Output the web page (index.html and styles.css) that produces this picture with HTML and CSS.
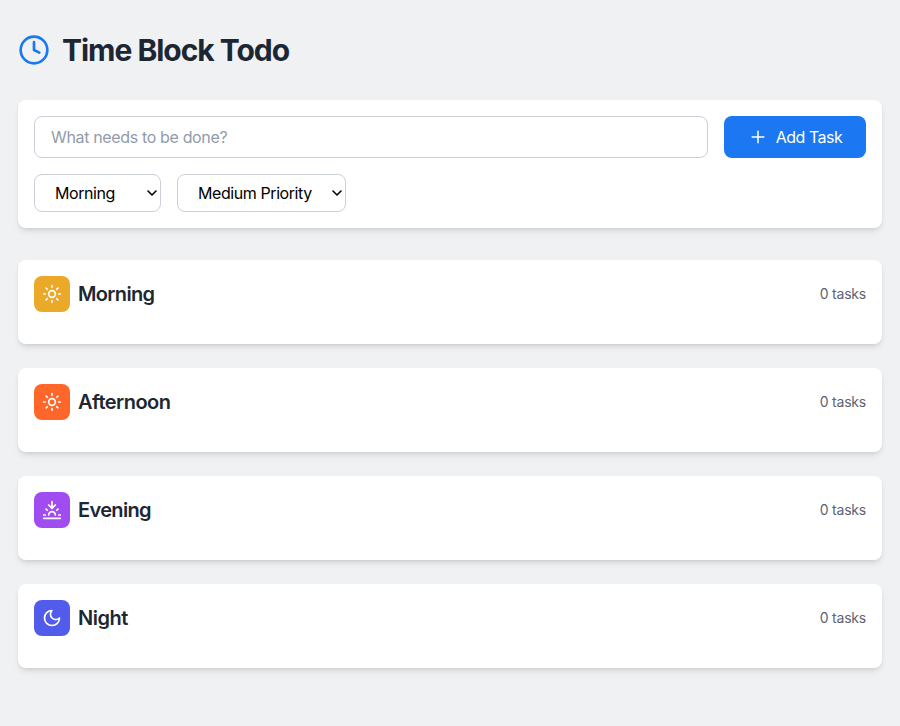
FILE: index.html
```html
<!DOCTYPE html>
<html lang="en">
<head>
<meta charset="utf-8">
<title>Time Block Todo</title>
<link rel="stylesheet" href="styles.css">
</head>
<body>
<main class="app">
  <header class="header">
    <svg class="icon logo" viewBox="0 0 24 24"><circle cx="12" cy="12" r="10"/><polyline points="12 6 12 12 16 14"/></svg>
    <h1 class="title">Time Block Todo</h1>
  </header>

  <form class="card form">
    <div class="row">
      <input class="task-input" type="text" placeholder="What needs to be done?">
      <button class="add" type="button">
        <svg class="icon" viewBox="0 0 24 24"><path d="M5 12h14M12 5v14"/></svg>
        <span class="add-label">Add Task</span>
      </button>
    </div>
    <div class="row">
      <div class="select-wrap block-select">
        <select class="select"><option>Morning</option><option>Afternoon</option><option>Evening</option><option>Night</option></select>
        <svg class="chevron" viewBox="0 0 10 6"><path d="M1 1l4 4 4-4"/></svg>
      </div>
      <div class="select-wrap priority-select">
        <select class="select"><option>Medium Priority</option><option>Low Priority</option><option>High Priority</option></select>
        <svg class="chevron" viewBox="0 0 10 6"><path d="M1 1l4 4 4-4"/></svg>
      </div>
    </div>
  </form>

  <div class="blocks">
    <section class="card block">
      <span class="badge morning"><svg class="icon" viewBox="0 0 24 24"><circle cx="12" cy="12" r="4"/><path d="M12 2v2M12 20v2M4.93 4.93l1.41 1.41M17.66 17.66l1.41 1.41M2 12h2M20 12h2M6.34 17.66l-1.41 1.41M19.07 4.93l-1.41 1.41"/></svg></span>
      <h2 class="name name-morning">Morning</h2>
      <span class="count">0 tasks</span>
    </section>
    <section class="card block">
      <span class="badge afternoon"><svg class="icon" viewBox="0 0 24 24"><circle cx="12" cy="12" r="4"/><path d="M12 2v2M12 20v2M4.93 4.93l1.41 1.41M17.66 17.66l1.41 1.41M2 12h2M20 12h2M6.34 17.66l-1.41 1.41M19.07 4.93l-1.41 1.41"/></svg></span>
      <h2 class="name name-afternoon">Afternoon</h2>
      <span class="count">0 tasks</span>
    </section>
    <section class="card block">
      <span class="badge evening"><svg class="icon" viewBox="0 0 24 24"><path d="M12 10V2M4.93 10.93l1.41 1.41M2 18h2M20 18h2M19.07 10.93l-1.41 1.41M22 22H2M16 6l-4 4-4-4M16 18a4 4 0 0 0-8 0"/></svg></span>
      <h2 class="name name-evening">Evening</h2>
      <span class="count">0 tasks</span>
    </section>
    <section class="card block">
      <span class="badge night"><svg class="icon" viewBox="0 0 24 24"><path d="M12 3a6 6 0 0 0 9 9 9 9 0 1 1-9-9Z"/></svg></span>
      <h2 class="name name-night">Night</h2>
      <span class="count">0 tasks</span>
    </section>
  </div>
</main>
</body>
</html>
```
FILE: styles.css
```css
* { box-sizing: border-box; }
body {
  margin: 0;
  min-height: 100vh;
  background: #f0f1f3;
  color: #1c2733;
  font: 16px/24px Inter, "Liberation Sans", sans-serif;
}
.app { padding: 32px 18px; }
.header { display: flex; align-items: center; gap: 12px; height: 36px; margin-bottom: 32px; }
.icon {
  display: block;
  flex: none;
  width: 20px;
  height: 20px;
  fill: none;
  stroke: currentColor;
  stroke-width: 2;
  stroke-linecap: round;
  stroke-linejoin: round;
}
.logo { width: 32px; height: 32px; color: #1b78f2; }
.title { margin: 0; font-size: 30px; line-height: 36px; font-weight: 700; letter-spacing: -1.02px; }
.card {
  background: #fff;
  border-radius: 8px;
  box-shadow: 0 4px 6px -1px rgba(0, 0, 0, .1), 0 2px 4px -2px rgba(0, 0, 0, .1);
}
.form { display: flex; flex-direction: column; gap: 16px; height: 128px; padding: 16px; margin-bottom: 32px; }
.row { display: flex; gap: 16px; }
.task-input {
  flex: 1;
  min-width: 0;
  height: 42px;
  padding: 8px 16px;
  border: 1px solid #cbcfd8;
  border-radius: 8px;
  background: #fff;
  font: inherit;
  letter-spacing: -0.35px;
}
.task-input::placeholder { color: #929ba9; opacity: 1; }
.add {
  display: flex;
  align-items: center;
  justify-content: center;
  gap: 8px;
  width: 142px;
  height: 42px;
  padding: 0;
  border: 0;
  border-radius: 8px;
  background: #1b78f2;
  color: #fff;
  font: inherit;
}
.add .icon { stroke-width: 1.8; }
.add-label { letter-spacing: -0.5px; }
.select-wrap { position: relative; height: 38px; }
.block-select { width: 127px; }
.priority-select { width: 169px; }
.select {
  display: block;
  width: 100%;
  height: 100%;
  padding: 0 20px;
  border: 1px solid #cbcfd8;
  border-radius: 8px;
  appearance: none;
  background: #fff;
  color: #000;
  font: inherit;
  letter-spacing: -0.42px;
}
.chevron {
  position: absolute;
  right: 4px;
  top: 16px;
  width: 10px;
  height: 6px;
  fill: none;
  stroke: #000;
  stroke-width: 1.6;
  stroke-linecap: round;
  stroke-linejoin: round;
  pointer-events: none;
}
.blocks { display: flex; flex-direction: column; gap: 24px; }
.block { display: flex; align-items: flex-start; gap: 8px; height: 84px; padding: 16px; }
.badge { padding: 8px; border-radius: 8px; color: #fff; }
.morning { background: #eba92a; }
.afternoon { background: #ff672a; }
.evening { background: #a04cf0; }
.night { background: #525ceb; }
.name { flex: 1; margin: 0; font-size: 20px; line-height: 36px; font-weight: 600; letter-spacing: -0.65px; }
.name-afternoon { letter-spacing: -0.52px; }
.name-night { letter-spacing: -0.5px; }
.count { font-size: 14px; line-height: 36px; letter-spacing: -0.2px; color: #5b6472; }
```
